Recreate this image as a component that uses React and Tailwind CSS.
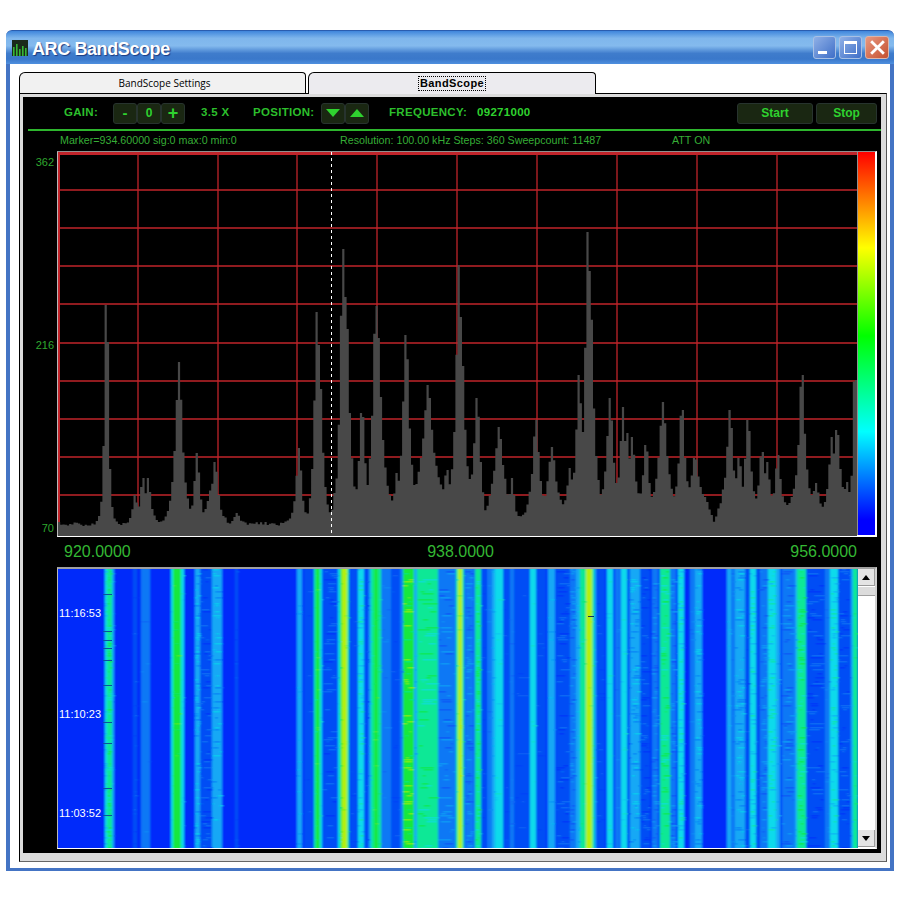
import React, { useMemo } from 'react';

const SANS = 'font-["Liberation_Sans",Arial,sans-serif]';

// [x, top, falloff]
const PEAKS = [
    [106.5, 305, 1.6], [135, 495, 2], [143, 478, 2.5], [148, 478, 2.5], [179, 362, 3.6], [188, 508, 2], [197, 453, 2.4], [212, 485, 5], [215, 462, 3.2], [237, 513, 2.5],
    [299, 448, 2.4], [317, 312, 2.4], [319, 345, 3], [335, 493, 2], [343, 249, 2.6], [346, 297, 3.4], [362, 413, 3], [376, 306, 3.2], [378, 338, 4], [388, 495, 2],
    [406, 335, 3.2], [397, 473, 2], [428, 385, 5.5], [447, 470, 2.5], [459, 265, 2.6], [461, 317, 3], [468, 471, 2], [477, 398, 2.6], [499, 427, 4], [512, 478, 2],
    [536, 420, 3.2], [552, 447, 4], [570, 468, 2.5], [579, 375, 2.6], [588, 232, 2.6], [590, 271, 3], [597, 487, 2], [610, 398, 3], [623, 407, 2.4], [627, 433, 3], [632, 437, 3], [646, 445, 2.6],
    [663, 402, 4.2], [682, 410, 2.6], [695, 458, 4], [730, 410, 2.8], [739, 458, 3], [748, 420, 3], [762, 452, 3], [767, 462, 3], [778, 455, 2.4], [802, 375, 2.8], [816, 483, 2], [832, 437, 2.6], [837, 430, 3], [847, 482, 2.4], [855, 380, 1.4],
];

const FLOOR = [
    [58, 524], [335, 524], [355, 520], [372, 512], [390, 512], [400, 518], [420, 505], [450, 503], [470, 503], [480, 505], [484, 522], [490, 505], [505, 505], [509, 522], [525, 518],
    [560, 512], [565, 515], [590, 505], [600, 510], [610, 508], [640, 510], [655, 513], [690, 505], [705, 505], [713, 522], [722, 505], [745, 517], [770, 515], [790, 505], [815, 505], [822, 512], [858, 505],
];

// [from, to, level, noisy]
const STRIPES = [
    [105, 107, 4, 1], [107, 112, 5, 1], [112, 114, 3], [133, 137, 1], [141, 150, 2], [171, 173, 4], [173, 181, 6], [181, 184, 4], [195, 200, 3, 1], [200, 212, 1, 1], [212, 222, 3, 1], [235, 238, 1],
    [297, 302, 3], [304, 313, 1], [314, 316, 5], [316, 320, 6], [320, 322, 4], [322, 338, 1, 1], [338, 340, 4], [340, 342, 6], [342, 347, 7], [347, 349, 5], [350, 358, 1], [358, 364, 4, 1], [365, 369, 1],
    [369, 371, 3], [371, 374, 5], [374, 378, 6], [378, 381, 5], [381, 391, 2], [391, 400, 1], [400, 403, 2], [403, 414, 6, 1], [414, 417, 3], [417, 438, 5, 1], [438, 456, 2, 1], [456, 458, 5], [458, 462, 7], [462, 464, 5], [465, 474, 2, 1], [475, 481, 5, 1], [481, 486, 1],
    [487, 492, 2], [492, 495, 3], [495, 503, 4], [503, 510, 1], [510, 514, 2], [514, 530, 1], [530, 536, 4], [536, 546, 1], [548, 555, 3], [556, 570, 1, 1], [570, 576, 2, 1], [576, 580, 3], [580, 586, 5], [586, 592, 7], [592, 594, 5], [594, 596, 3], [596, 605, 1],
    [607, 613, 4], [615, 620, 2], [621, 627, 4], [627, 630, 1], [630, 640, 3, 1], [640, 650, 1, 1], [652, 658, 2, 1], [660, 670, 5, 1], [670, 676, 2, 1], [678, 684, 4, 1], [690, 695, 2], [695, 702, 3, 1],
    [727, 731, 3], [731, 735, 2], [735, 745, 3, 1], [745, 750, 1], [750, 756, 4, 1], [756, 760, 1], [760, 768, 2, 1], [768, 776, 4, 1], [776, 780, 3], [782, 795, 2, 1], [795, 797, 3], [797, 806, 5, 1], [806, 825, 1, 1], [825, 830, 2], [830, 838, 4, 1], [838, 851, 1, 1], [851, 853, 3], [853, 858, 5],
];

const LEVELS = [[2, 44, 250], [6, 78, 245], [10, 120, 245], [18, 168, 245], [14, 218, 235], [12, 232, 150], [20, 232, 60], [180, 240, 8]];
const GRID_X = [138, 218, 297, 377, 457, 537, 617, 697, 777];
const GRID_Y = [190, 228, 266, 304, 343, 381, 419, 457, 495];

const rng = (seed) => () => {
    seed = (seed * 16807) % 2147483647;
    return seed / 2147483647;
};

const rgb = (c) => `rgb(${c.map(Math.round).join(',')})`;
const mix = (a, b, t) => a.map((v, i) => v + (b[i] - v) * t);

const floorAt = (x) => {
    for (let i = 1; i < FLOOR.length; i++) {
        const [x1, y1] = FLOOR[i];
        const [x0, y0] = FLOOR[i - 1];
        if (x <= x1) return y0 + ((y1 - y0) * (x - x0)) / (x1 - x0);
    }
    return 505;
};

const Spectrum = () => {
    const points = useMemo(() => {
        const rand = rng(4711);
        const pts = ['58,536'];
        for (let x = 58; x < 857; x += 2.22) {
            const base = floorAt(x) + (rand() - 0.5) * 4;
            let y = base;
            PEAKS.forEach(([px, top, w]) => {
                const d = Math.max(0, Math.abs(x + 1.11 - px) - 1.11);
                const v = base - (base - top) * Math.exp(-d / (w * 1.15));
                if (v < y) y = v;
            });
            pts.push(`${x.toFixed(1)},${y.toFixed(1)}`, `${(x + 2.22).toFixed(1)},${y.toFixed(1)}`);
        }
        pts.push('857,536');
        return pts.join(' ');
    }, []);

    return (
        <svg viewBox="58 152 799 384" className="block w-[799px] h-[384px] shrink-0">
            {GRID_X.map((x) => <line key={x} x1={x} x2={x} y1="152" y2="536" stroke="#c0242a" strokeWidth="1.3" />)}
            {GRID_Y.map((y) => <line key={y} x1="58" x2="857" y1={y} y2={y} stroke="#c0242a" strokeWidth="1.3" />)}
            <rect x="58" y="152" width="799" height="3" fill="#c0242a" />
            <rect x="58" y="152" width="2" height="384" fill="#c0242a" />
            <polygon points={points} fill="#484848" />
            <line x1="331.5" x2="331.5" y1="152" y2="534" stroke="#fff" strokeWidth="1" strokeDasharray="3 3" />
        </svg>
    );
};

const Waterfall = () => {
    const specks = useMemo(() => {
        const rand = rng(90210);
        const out = [];
        STRIPES.forEach(([x0, x1, level, noisy]) => {
            const chance = noisy ? 0.4 : 0.08;
            for (let y = 569; y < 848; y += 2) {
                if (rand() > chance) continue;
                const next = Math.max(0, Math.min(7, level + (rand() > 0.4 ? 1 : -1)));
                const w = 1 + rand() * (x1 - x0) * 0.7;
                out.push({ x: x0 + rand() * (x1 - x0 - w + 1), y, w, fill: rgb(mix(LEVELS[level], LEVELS[next], noisy ? 0.6 : 0.3)) });
            }
        });
        return out;
    }, []);

    return (
        <svg viewBox="58 569 800 279" className="block w-[800px] h-[279px] shrink-0">
            <defs>
                <filter id="soft" x="0" y="0" width="1" height="1">
                    <feGaussianBlur stdDeviation="0.9 0.25" />
                </filter>
            </defs>
            <rect x="58" y="569" width="800" height="279" fill={rgb(LEVELS[0])} />
            <g filter="url(#soft)">
                <rect x="58" y="569" width="800" height="279" fill={rgb(LEVELS[0])} />
                {STRIPES.map(([x0, x1, level]) => <rect key={x0} x={x0} y="569" width={x1 - x0} height="279" fill={rgb(LEVELS[level])} />)}
                {specks.map((s, i) => <rect key={i} x={s.x} y={s.y} width={s.w} height="1.6" fill={s.fill} />)}
            </g>
            {[594, 631, 640, 648, 660, 685, 722, 743, 788, 815].map((y) => <rect key={y} x="103" y={y} width="9" height="1" fill="#0a52a0" />)}
            <rect x="588" y="616" width="6" height="1" fill="#103060" />
        </svg>
    );
};

const ScopeButton = ({ children, className = 'w-[24px]' }) => (
    <div className={`h-[21px] ${className} flex items-center justify-center bg-[#1a2712] border border-[#27332e] rounded-[3px] text-[#2fd22f] font-bold`}>
        {children}
    </div>
);

const Label = ({ children, className = '' }) => (
    <span className={`text-[11.5px] font-bold tracking-[0.3px] text-[#2cbf2c] leading-none ${className}`}>{children}</span>
);

const ScrollArrow = ({ up }) => (
    <div className="h-[17px] bg-[#e4e4e4] border-b border-r border-[#9a9a9a] flex items-center justify-center shrink-0">
        <svg viewBox="0 0 8 5" className="w-[8px] h-[5px]">
            <polygon points={up ? '4,0 8,5 0,5' : '0,0 8,0 4,5'} fill="#000" />
        </svg>
    </div>
);

export default function App() {
    return (
        <div className={`w-[900px] h-[900px] bg-white pt-[30px] pl-[6px] ${SANS}`}>
            <div className="w-[888px] h-[841px] flex flex-col">
                {/* title bar */}
                <div className="h-[34px] shrink-0 flex items-center pl-[6px] pr-[6px] rounded-t-[6px] border-t border-[#2a5db0] bg-[linear-gradient(180deg,#3f86dc_0%,#7fb6ec_22%,#84baee_45%,#3f7ccc_68%,#3a78ca_85%,#4e8fdf_100%)]">
                    <svg viewBox="0 0 16 16" className="w-[16px] h-[16px] shrink-0">
                        <rect width="16" height="16" fill="#1a2a1a" />
                        {[2, 5, 8, 11, 14].map((x, i) => <rect key={x} x={x - 1} y={[7, 4, 9, 6, 8][i]} width="1.6" height={16 - [7, 4, 9, 6, 8][i]} fill="#35b535" />)}
                    </svg>
                    <span className="ml-[4px] mt-[2px] text-[18px] tracking-[-0.4px] font-bold text-white leading-none [text-shadow:1px_1px_1px_#1a3a80]">ARC BandScope</span>
                    <div className="ml-auto flex gap-[3px] mr-[-1px]">
                        <div className="w-[23px] h-[23px] rounded-[3px] border border-[#a8c0e4] bg-[linear-gradient(135deg,#8fb0e6,#3f6fc8)] flex items-end pl-[4px] pb-[4px]">
                            <div className="w-[9px] h-[3px] bg-white" />
                        </div>
                        <div className="w-[23px] h-[23px] rounded-[3px] border border-[#a8c0e4] bg-[linear-gradient(135deg,#8fb0e6,#3f6fc8)] flex items-center justify-center">
                            <div className="w-[13px] h-[13px] border border-white border-t-[3px]" />
                        </div>
                        <div className="w-[24px] h-[23px] rounded-[3px] border border-[#dcb4a8] bg-[linear-gradient(135deg,#e89880,#c4502f)] flex items-center justify-center">
                            <svg viewBox="0 0 14 14" className="w-[15px] h-[15px]">
                                <path d="M2 2 L12 12 M12 2 L2 12" stroke="#fff" strokeWidth="2.6" strokeLinecap="square" />
                            </svg>
                        </div>
                    </div>
                </div>

                {/* client area */}
                <div className="flex-1 flex flex-col bg-white border-x-4 border-b-[3px] border-[#4474c4] pt-[8px] pl-[9px] pr-[3px]">
                    <div className="h-[21px] shrink-0 flex text-[11px] text-black">
                        <div className="w-[287px] h-full flex items-center justify-center pl-[4px] border border-b-0 border-black rounded-tl-[6px] rounded-tr-[4px] bg-[#f1f1f1]">
                            <span className="font-['Open_Sans',sans-serif] text-[10px]">BandScope Settings</span>
                        </div>
                        <div className="ml-[2px] w-[288px] h-[22px] relative z-10 flex items-center justify-center border border-b-0 border-black rounded-tl-[6px] rounded-tr-[4px] bg-[#ecebef]">
                            <span className="font-bold tracking-[0.4px] border border-dotted border-black px-[1px] leading-[13px]">BandScope</span>
                        </div>
                    </div>

                    <div className="w-[868px] h-[769px] border-t border-l border-black border-r border-r-[#555] border-b border-b-[#666] bg-[#dcdcdc] pt-[3px] pl-[3px]">
                        <div className="w-[858px] h-[756px] bg-black flex flex-col">
                            {/* toolbar */}
                            <div className="h-[32px] shrink-0 flex items-center">
                                <Label className="ml-[41px] w-[49px]">GAIN:</Label>
                                <ScopeButton className="w-[24px] text-[15px]">-</ScopeButton>
                                <ScopeButton className="w-[24px] text-[12px]">0</ScopeButton>
                                <ScopeButton className="w-[24px] text-[18px]">+</ScopeButton>
                                <Label className="ml-[16px] w-[52px]">3.5 X</Label>
                                <Label className="w-[68px]">POSITION:</Label>
                                <ScopeButton>
                                    <svg viewBox="0 0 14 8" className="w-[14px] h-[8px]"><polygon points="0,0 14,0 7,8" fill="#2fd22f" /></svg>
                                </ScopeButton>
                                <ScopeButton>
                                    <svg viewBox="0 0 14 8" className="w-[14px] h-[8px]"><polygon points="7,0 14,8 0,8" fill="#2fd22f" /></svg>
                                </ScopeButton>
                                <Label className="ml-[20px] w-[88px]">FREQUENCY:</Label>
                                <Label className="text-[#2fd22f]">09271000</Label>
                                <ScopeButton className="ml-auto w-[76px] text-[12px]">Start</ScopeButton>
                                <ScopeButton className="ml-[3px] mr-[4px] w-[61px] text-[12px]">Stop</ScopeButton>
                            </div>
                            <div className="h-[2px] shrink-0 ml-[5px] bg-[#2db52d]" />

                            {/* status line */}
                            <div className="h-[20px] shrink-0 flex items-center text-[10.7px] text-[#36ad36] pb-[1px]">
                                <span className="ml-[37px] w-[280px]">Marker=934.60000 sig:0 max:0 min:0</span>
                                <span className="w-[332px]">Resolution: 100.00 kHz Steps: 360 Sweepcount: 11487</span>
                                <span>ATT ON</span>
                            </div>

                            {/* spectrum */}
                            <div className="h-[386px] shrink-0 flex">
                                <div className="w-[34px] shrink-0 flex flex-col justify-between items-end pr-[3px] pt-[3px] pb-[1px] text-[11px] text-[#2fa82f]">
                                    <span>362</span>
                                    <span>216</span>
                                    <span>70</span>
                                </div>
                                <div className="w-[820px] shrink-0 flex border-t border-t-[#909090] border-l border-l-[#b8b8b8] border-r-2 border-r-white border-b-2 border-b-white">
                                    <Spectrum />
                                    <div className="flex-1 border-l border-[#909090] bg-[linear-gradient(180deg,#ff0000_0%,#ffff00_25%,#00ff00_48%,#00ffff_73%,#0000ff_96%)]" />
                                </div>
                            </div>

                            {/* frequency scale */}
                            <div className="h-[30px] shrink-0 flex items-center justify-between text-[16px] text-[#34b834] pl-[41px] pr-[24px]">
                                <span>920.0000</span>
                                <span>938.0000</span>
                                <span>956.0000</span>
                            </div>

                            {/* waterfall */}
                            <div className="ml-[34px] w-[820px] h-[282px] shrink-0 flex relative border-t-2 border-t-[#a0a0a0] border-l border-l-[#b8b8b8] border-r-2 border-r-[#d0d0d0] border-b-2 border-b-white">
                                <Waterfall />
                                <div className="flex-1 flex flex-col bg-white">
                                    <ScrollArrow up />
                                    <div className="h-[9px] mt-[1px] bg-[#dcdcdc] border-b border-[#a0a0a0]" />
                                    <div className="flex-1" />
                                    <ScrollArrow />
                                </div>
                                <div className="absolute left-[1px] top-[38px] text-[11px] leading-[13px] text-white">11:16:53</div>
                                <div className="absolute left-[1px] top-[139px] text-[11px] leading-[13px] text-white">11:10:23</div>
                                <div className="absolute left-[1px] top-[238px] text-[11px] leading-[13px] text-white">11:03:52</div>
                            </div>
                        </div>
                    </div>
                </div>
            </div>
        </div>
    );
}
